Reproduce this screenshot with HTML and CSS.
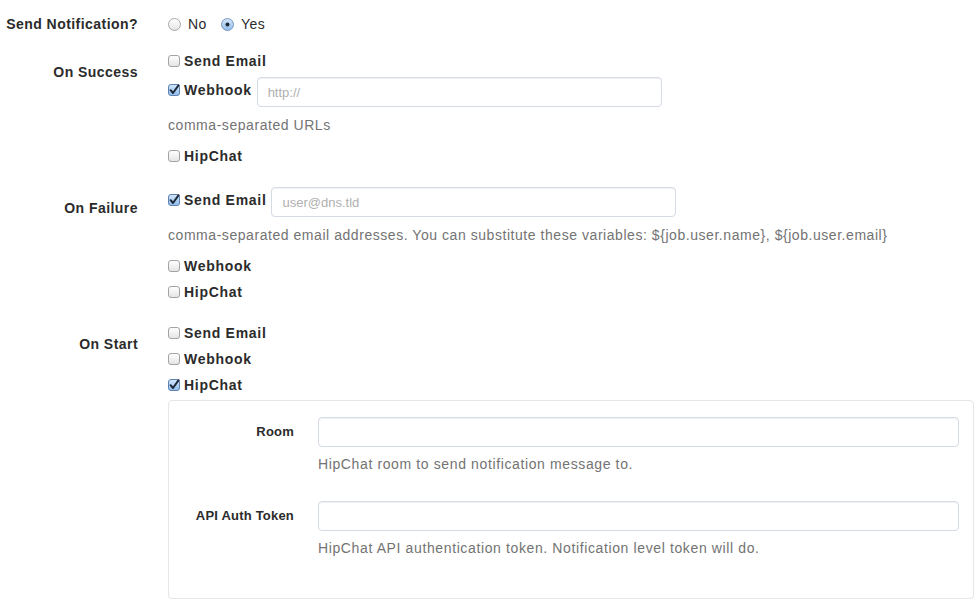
FILE: index.html
```html
<!DOCTYPE html>
<html>
<head>
<meta charset="utf-8">
<link rel="stylesheet" href="styles.css">
</head>
<body>
<svg width="0" height="0" class="defs" aria-hidden="true">
  <defs>
    <linearGradient id="gOff" x1="0" y1="0" x2="0" y2="1">
      <stop offset="0" stop-color="#ffffff"/>
      <stop offset="1" stop-color="#e4e4e4"/>
    </linearGradient>
    <linearGradient id="gOn" x1="0" y1="0" x2="0" y2="1">
      <stop offset="0" stop-color="#d6e8fb"/>
      <stop offset="1" stop-color="#8fbbec"/>
    </linearGradient>
    <symbol id="cbOff" viewBox="0 0 12 12">
      <rect x="0.5" y="0.5" width="11" height="11" rx="2.5" fill="url(#gOff)" stroke="#a3a3a3"/>
    </symbol>
    <symbol id="cbOn" viewBox="0 0 12 12">
      <rect x="0.5" y="0.5" width="11" height="11" rx="2.5" fill="url(#gOn)" stroke="#5f83b0"/>
      <path d="M2.6 6.2 L5 9 L10.6 1.2" fill="none" stroke="#1e2a3a" stroke-width="2" stroke-linecap="round" stroke-linejoin="round"/>
    </symbol>
    <symbol id="rOff" viewBox="0 0 13 13">
      <circle cx="6.5" cy="6.5" r="6" fill="url(#gOff)" stroke="#a8a8a8"/>
    </symbol>
    <symbol id="rOn" viewBox="0 0 13 13">
      <circle cx="6.5" cy="6.5" r="6" fill="url(#gOn)" stroke="#7a98bd"/>
      <circle cx="6.5" cy="6.5" r="2" fill="#1f2732"/>
    </symbol>
  </defs>
</svg>

<form class="form">
  <div class="group group-first">
    <div class="glabel glabel-inline">Send Notification?</div>
    <div class="radios">
      <label class="radio"><svg class="ri"><use href="#rOff"/></svg><span>No</span></label>
      <label class="radio"><svg class="ri"><use href="#rOn"/></svg><span>Yes</span></label>
    </div>
  </div>

  <div class="group">
    <div class="glabel">On Success</div>
    <div class="controls">
      <label class="check"><svg class="ci"><use href="#cbOff"/></svg><span>Send Email</span></label>
      <div class="check-row">
        <label class="check"><svg class="ci"><use href="#cbOn"/></svg><span>Webhook</span></label>
        <input class="field" type="text" placeholder="http://">
      </div>
      <p class="help">comma-separated URLs</p>
      <label class="check"><svg class="ci"><use href="#cbOff"/></svg><span>HipChat</span></label>
    </div>
  </div>

  <div class="group">
    <div class="glabel">On Failure</div>
    <div class="controls">
      <div class="check-row">
        <label class="check"><svg class="ci"><use href="#cbOn"/></svg><span>Send Email</span></label>
        <input class="field" type="text" placeholder="user@dns.tld">
      </div>
      <p class="help">comma-separated email addresses. You can substitute these variables: ${job.user.name}, ${job.user.email}</p>
      <label class="check"><svg class="ci"><use href="#cbOff"/></svg><span>Webhook</span></label>
      <label class="check"><svg class="ci"><use href="#cbOff"/></svg><span>HipChat</span></label>
    </div>
  </div>

  <div class="group">
    <div class="glabel">On Start</div>
    <div class="controls">
      <label class="check"><svg class="ci"><use href="#cbOff"/></svg><span>Send Email</span></label>
      <label class="check"><svg class="ci"><use href="#cbOff"/></svg><span>Webhook</span></label>
      <label class="check"><svg class="ci"><use href="#cbOn"/></svg><span>HipChat</span></label>
      <div class="panel">
        <div class="prow">
          <div class="plabel">Room</div>
          <div class="pfield">
            <input class="field field-wide" type="text">
            <p class="phelp">HipChat room to send notification message to.</p>
          </div>
        </div>
        <div class="prow">
          <div class="plabel">API Auth Token</div>
          <div class="pfield">
            <input class="field field-wide" type="text">
            <p class="phelp">HipChat API authentication token. Notification level token will do.</p>
          </div>
        </div>
      </div>
    </div>
  </div>
</form>
</body>
</html>
```

FILE: styles.css
```css
* { box-sizing: border-box; }

html, body {
  margin: 0;
  padding: 0;
  background: #ffffff;
}

body {
  font-family: "Liberation Sans", Arial, sans-serif;
  font-size: 14px;
  line-height: 20px;
  color: #333333;
}

.defs {
  position: absolute;
  width: 0;
  height: 0;
  overflow: hidden;
}

.form {
  display: flex;
  flex-direction: column;
  gap: 21px;
  padding-top: 14px;
}

.group {
  display: grid;
  grid-template-columns: 138px 1fr;
  column-gap: 30px;
}

.group-first {
  margin-bottom: -4px;
}

.glabel {
  text-align: right;
  font-weight: bold;
  letter-spacing: 0.45px;
  color: #2b2b2b;
  padding-top: 11px;
  white-space: nowrap;
}

.glabel-inline {
  padding-top: 0;
}

.radios {
  display: flex;
  align-items: center;
  height: 20px;
}

.radio {
  display: flex;
  align-items: center;
  gap: 7px;
  margin-right: 14px;
  letter-spacing: 0.5px;
  color: #2b2b2b;
}

.ri {
  width: 13px;
  height: 13px;
  flex: none;
}

.controls {
  display: flex;
  flex-direction: column;
  align-items: flex-start;
  gap: 6px;
  padding-right: 5px;
}

.check {
  display: flex;
  align-items: center;
  gap: 4px;
  height: 20px;
  font-weight: bold;
  letter-spacing: 0.7px;
  color: #2b2b2b;
}

.ci {
  width: 12px;
  height: 12px;
  flex: none;
}

.check-row {
  display: flex;
  align-items: flex-start;
  gap: 5px;
  height: 30px;
}

.check-row .check {
  margin-top: 3px;
}

.field {
  width: 405px;
  height: 30px;
  border: 1px solid #d4dbe4;
  border-radius: 4px;
  box-shadow: inset 0 1px 1px rgba(0, 0, 0, 0.06);
  padding: 0 10px;
  font-family: "Liberation Sans", Arial, sans-serif;
  font-size: 13px;
  color: #555555;
  background: #ffffff;
  outline: none;
}

.field::placeholder {
  color: #b0b0b0;
}

.help {
  margin: 2px 0 5px;
  color: #737373;
  letter-spacing: 0.55px;
  white-space: nowrap;
}

.panel {
  align-self: stretch;
  margin-top: -1px;
  border: 1px solid #e6e6e6;
  border-radius: 4px;
  box-shadow: 0 1px 1px rgba(0, 0, 0, 0.04);
  padding: 16px 14px 40px 0;
  display: flex;
  flex-direction: column;
  gap: 27px;
}

.prow {
  display: grid;
  grid-template-columns: 125px 1fr;
  column-gap: 24px;
}

.plabel {
  text-align: right;
  font-weight: bold;
  font-size: 13px;
  letter-spacing: 0.2px;
  color: #2b2b2b;
  padding-top: 5px;
  white-space: nowrap;
}

.pfield {
  display: flex;
  flex-direction: column;
  gap: 7px;
}

.field-wide {
  width: 100%;
}

.phelp {
  margin: 0;
  color: #737373;
  letter-spacing: 0.62px;
  white-space: nowrap;
}
```
